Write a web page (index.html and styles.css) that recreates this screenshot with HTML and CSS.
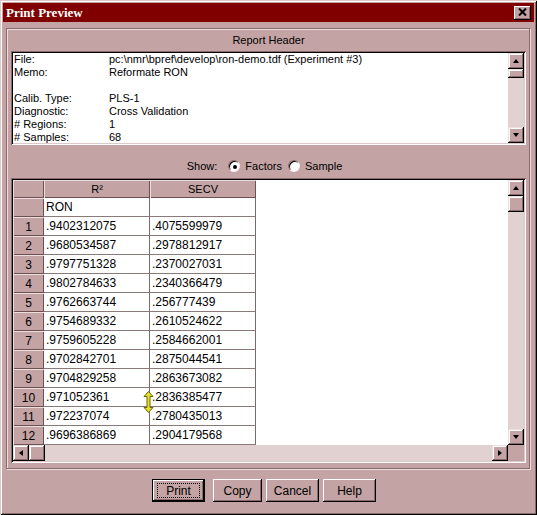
FILE: index.html
```html
<!DOCTYPE html>
<html>
<head>
<meta charset="utf-8">
<link rel="stylesheet" href="styles.css">
</head>
<body>
<div class="window">
  <div class="titlebar">
    <span class="title">Print Preview</span>
    <span class="close"><svg width="9" height="8" viewBox="0 0 9 8"><path d="M1 0.5 L8 7.5 M8 0.5 L1 7.5" stroke="#000" stroke-width="2" fill="none"/></svg></span>
  </div>
  <div class="group">
    <div class="group-title">Report Header</div>
    <div class="memo">
      <div class="memo-text">
        <div class="line"><span class="lbl">File:</span><span>pc:\nmr\bpref\develop\ron-demo.tdf (Experiment #3)</span></div>
        <div class="line"><span class="lbl">Memo:</span><span>Reformate RON</span></div>
        <div class="line"></div>
        <div class="line"><span class="lbl">Calib. Type:</span><span>PLS-1</span></div>
        <div class="line"><span class="lbl">Diagnostic:</span><span>Cross Validation</span></div>
        <div class="line"><span class="lbl"># Regions:</span><span>1</span></div>
        <div class="line"><span class="lbl"># Samples:</span><span>68</span></div>
      </div>
      <div class="vscroll">
        <div class="sbtn"><span class="arr-up"></span></div>
        <div class="thumb small"></div>
        <div class="track"></div>
        <div class="sbtn"><span class="arr-down"></span></div>
      </div>
    </div>
    <div class="show-row">
      <span class="show-lbl">Show:</span>
      <span class="radio checked"></span><span class="opt">Factors</span>
      <span class="radio"></span><span class="opt">Sample</span>
    </div>
    <div class="grid">
      <div class="grid-main">
        <div class="grid-area">
          <div class="sheet">
            <div class="hd"></div><div class="hd">R²</div><div class="hd">SECV</div>
            <div class="rh"></div><div class="cell">RON</div><div class="cell"></div>
            <div class="rh">1</div><div class="cell">.9402312075</div><div class="cell">.4075599979</div>
            <div class="rh">2</div><div class="cell">.9680534587</div><div class="cell">.2978812917</div>
            <div class="rh">3</div><div class="cell">.9797751328</div><div class="cell">.2370027031</div>
            <div class="rh">4</div><div class="cell">.9802784633</div><div class="cell">.2340366479</div>
            <div class="rh">5</div><div class="cell">.9762663744</div><div class="cell">.256777439</div>
            <div class="rh">6</div><div class="cell">.9754689332</div><div class="cell">.2610524622</div>
            <div class="rh">7</div><div class="cell">.9759605228</div><div class="cell">.2584662001</div>
            <div class="rh">8</div><div class="cell">.9702842701</div><div class="cell">.2875044541</div>
            <div class="rh">9</div><div class="cell">.9704829258</div><div class="cell">.2863673082</div>
            <div class="rh">10</div><div class="cell">.971052361</div><div class="cell">.2836385477</div>
            <div class="rh">11</div><div class="cell">.972237074</div><div class="cell">.2780435013</div>
            <div class="rh">12</div><div class="cell">.9696386869</div><div class="cell">.2904179568</div>
          </div>
        </div>
        <div class="vscroll">
          <div class="sbtn"><span class="arr-up"></span></div>
          <div class="thumb"></div>
          <div class="track"></div>
          <div class="sbtn"><span class="arr-down"></span></div>
        </div>
      </div>
      <div class="hrow">
        <div class="hscroll">
          <div class="sbtn"><span class="arr-left"></span></div>
          <div class="thumb"></div>
          <div class="track"></div>
          <div class="sbtn"><span class="arr-right"></span></div>
        </div>
        <div class="corner"></div>
      </div>
      <svg class="cursor" width="11" height="22" viewBox="0 0 11 22"><path d="M5.5 0.5 L10 5.5 L7 5.5 L7 16.5 L10 16.5 L5.5 21.5 L1 16.5 L4 16.5 L4 5.5 L1 5.5 Z" fill="#e6e02a" stroke="#6a6400" stroke-width="1"/></svg>
    </div>
  </div>
  <div class="buttons">
    <div class="btn default"><span class="focus">Print</span></div>
    <div class="btn copy">Copy</div>
    <div class="btn cancel">Cancel</div>
    <div class="btn help">Help</div>
  </div>
</div>
</body>
</html>
```

FILE: styles.css
```css
html, body {
  margin: 0;
  padding: 0;
  background: #c3a3a3;
}
body {
  font-family: "Liberation Sans", Arial, sans-serif;
  font-size: 11px;
  color: #000;
}
.window {
  width: 537px;
  height: 515px;
  box-sizing: border-box;
  padding: 3px;
  background: #c3a3a3;
  box-shadow: inset 1px 1px 0 #dccaca, inset -1px -1px 0 #000, inset 2px 2px 0 #fff, inset -2px -2px 0 #8a6a6a;
  display: flex;
  flex-direction: column;
}
.titlebar {
  height: 19px;
  background: #800000;
  display: flex;
  align-items: center;
  justify-content: space-between;
  padding-left: 3px;
}
.title {
  font-family: "Liberation Serif", "Times New Roman", serif;
  font-weight: bold;
  font-size: 13px;
  color: #fff;
}
.close {
  width: 17px;
  height: 14px;
  margin-right: 3px;
  background: #c3a3a3;
  box-sizing: border-box;
  box-shadow: inset -1px -1px 0 #000, inset 1px 1px 0 #fff, inset -2px -2px 0 #8a6a6a;
  display: flex;
  align-items: center;
  justify-content: center;
  padding-bottom: 1px;
}
.group {
  margin: 6px 4px 0 3px;
  border: 1px solid #8a6a6a;
  box-shadow: 1px 1px 0 #ecdede, inset 1px 1px 0 #ecdede;
  padding: 0 3px 5px 4px;
  display: flex;
  flex-direction: column;
}
.group-title {
  height: 22px;
  line-height: 22px;
  text-align: center;
}
.memo {
  height: 94px;
  box-sizing: border-box;
  padding: 2px;
  background: #fff;
  box-shadow: inset 1px 1px 0 #8a6a6a, inset -1px -1px 0 #fff, inset 2px 2px 0 #000, inset -2px -2px 0 #dccaca;
  display: flex;
}
.memo-text {
  flex: 1;
  padding: 0 0 0 1px;
  overflow: hidden;
}
.line {
  height: 13px;
  line-height: 13px;
  display: flex;
  white-space: nowrap;
}
.lbl {
  width: 95px;
}
.vscroll {
  width: 16px;
  display: flex;
  flex-direction: column;
  background: #e1d1d1;
}
.hscroll {
  flex: 1;
  height: 16px;
  display: flex;
  background: #e1d1d1;
}
.sbtn, .thumb {
  width: 16px;
  height: 16px;
  flex: none;
  box-sizing: border-box;
  background: #c3a3a3;
  box-shadow: inset -1px -1px 0 #000, inset 1px 1px 0 #ecdede, inset -2px -2px 0 #8a6a6a, inset 2px 2px 0 #fff;
  display: flex;
  align-items: center;
  justify-content: center;
}
.thumb.small {
  height: 9px;
}
.track {
  flex: 1;
}
.arr-up, .arr-down, .arr-left, .arr-right {
  width: 0;
  height: 0;
  border-style: solid;
  border-color: transparent;
}
.arr-up {
  border-width: 0 3.5px 4px 3.5px;
  border-bottom-color: #000;
  margin-bottom: 1px;
}
.arr-down {
  border-width: 4px 3.5px 0 3.5px;
  border-top-color: #000;
}
.arr-left {
  border-width: 3.5px 4px 3.5px 0;
  border-right-color: #000;
}
.arr-right {
  border-width: 3.5px 0 3.5px 4px;
  border-left-color: #000;
}
.show-row {
  height: 20px;
  margin: 11px 0 2px;
  display: flex;
  align-items: center;
  justify-content: center;
  padding-right: 2px;
}
.show-lbl {
  margin-right: 11px;
}
.radio {
  width: 12px;
  height: 12px;
  box-sizing: border-box;
  border-radius: 50%;
  background: #fff;
  border: 1px solid;
  border-color: #8a6a6a #f4ecec #f4ecec #8a6a6a;
  box-shadow: inset 1px 1px 0 #000;
  display: flex;
  align-items: center;
  justify-content: center;
  margin-right: 5px;
}
.radio.checked::after {
  content: "";
  width: 4px;
  height: 4px;
  border-radius: 50%;
  background: #000;
  margin: 1px 0 0 1px;
}
.opt {
  margin-right: 6px;
}
.grid {
  position: relative;
  height: 285px;
  box-sizing: border-box;
  padding: 2px;
  box-shadow: inset 1px 1px 0 #8a6a6a, inset -1px -1px 0 #fff, inset 2px 2px 0 #000, inset -2px -2px 0 #dccaca;
  display: flex;
  flex-direction: column;
}
.grid-main {
  flex: 1;
  display: flex;
}
.grid-area {
  flex: 1;
  background: #fff;
  overflow: hidden;
}
.sheet {
  display: grid;
  grid-template-columns: 31px 106px 106px;
  grid-template-rows: 18px repeat(13, 19px);
  width: 243px;
}
.hd, .rh {
  background: #c3a3a3;
  box-sizing: border-box;
  box-shadow: inset 1px 1px 0 #ecdede, inset -1px -1px 0 #6e5050;
  display: flex;
  align-items: center;
  justify-content: center;
}
.rh {
  font-size: 12px;
}
.cell {
  box-sizing: border-box;
  border-right: 1px solid #7a6a6a;
  border-bottom: 1px solid #8a7a7a;
  padding-left: 2px;
  display: flex;
  align-items: center;
  font-size: 12px;
  white-space: nowrap;
}
.hrow {
  height: 16px;
  display: flex;
}
.corner {
  width: 16px;
  background: #c3a3a3;
}
.cursor {
  position: absolute;
  left: 132px;
  top: 213px;
}
.buttons {
  display: flex;
  margin-top: 10px;
  padding-left: 149px;
  gap: 4px;
}
.btn {
  height: 23px;
  box-sizing: border-box;
  background: #c3a3a3;
  box-shadow: inset -1px -1px 0 #000, inset 1px 1px 0 #fff, inset -2px -2px 0 #8a6a6a;
  display: flex;
  align-items: center;
  justify-content: center;
  font-size: 12px;
}
.btn.default {
  width: 53px;
  margin-right: 4px;
  border: 1px solid #000;
  box-shadow: inset -1px -1px 0 #000, inset 1px 1px 0 #fff, inset -2px -2px 0 #8a6a6a;
}
.focus {
  width: 43px;
  height: 15px;
  box-sizing: border-box;
  border: 1px dotted #000;
  display: flex;
  align-items: center;
  justify-content: center;
}
.btn.copy { width: 49px; }
.btn.cancel { width: 53px; }
.btn.help { width: 53px; }
```
